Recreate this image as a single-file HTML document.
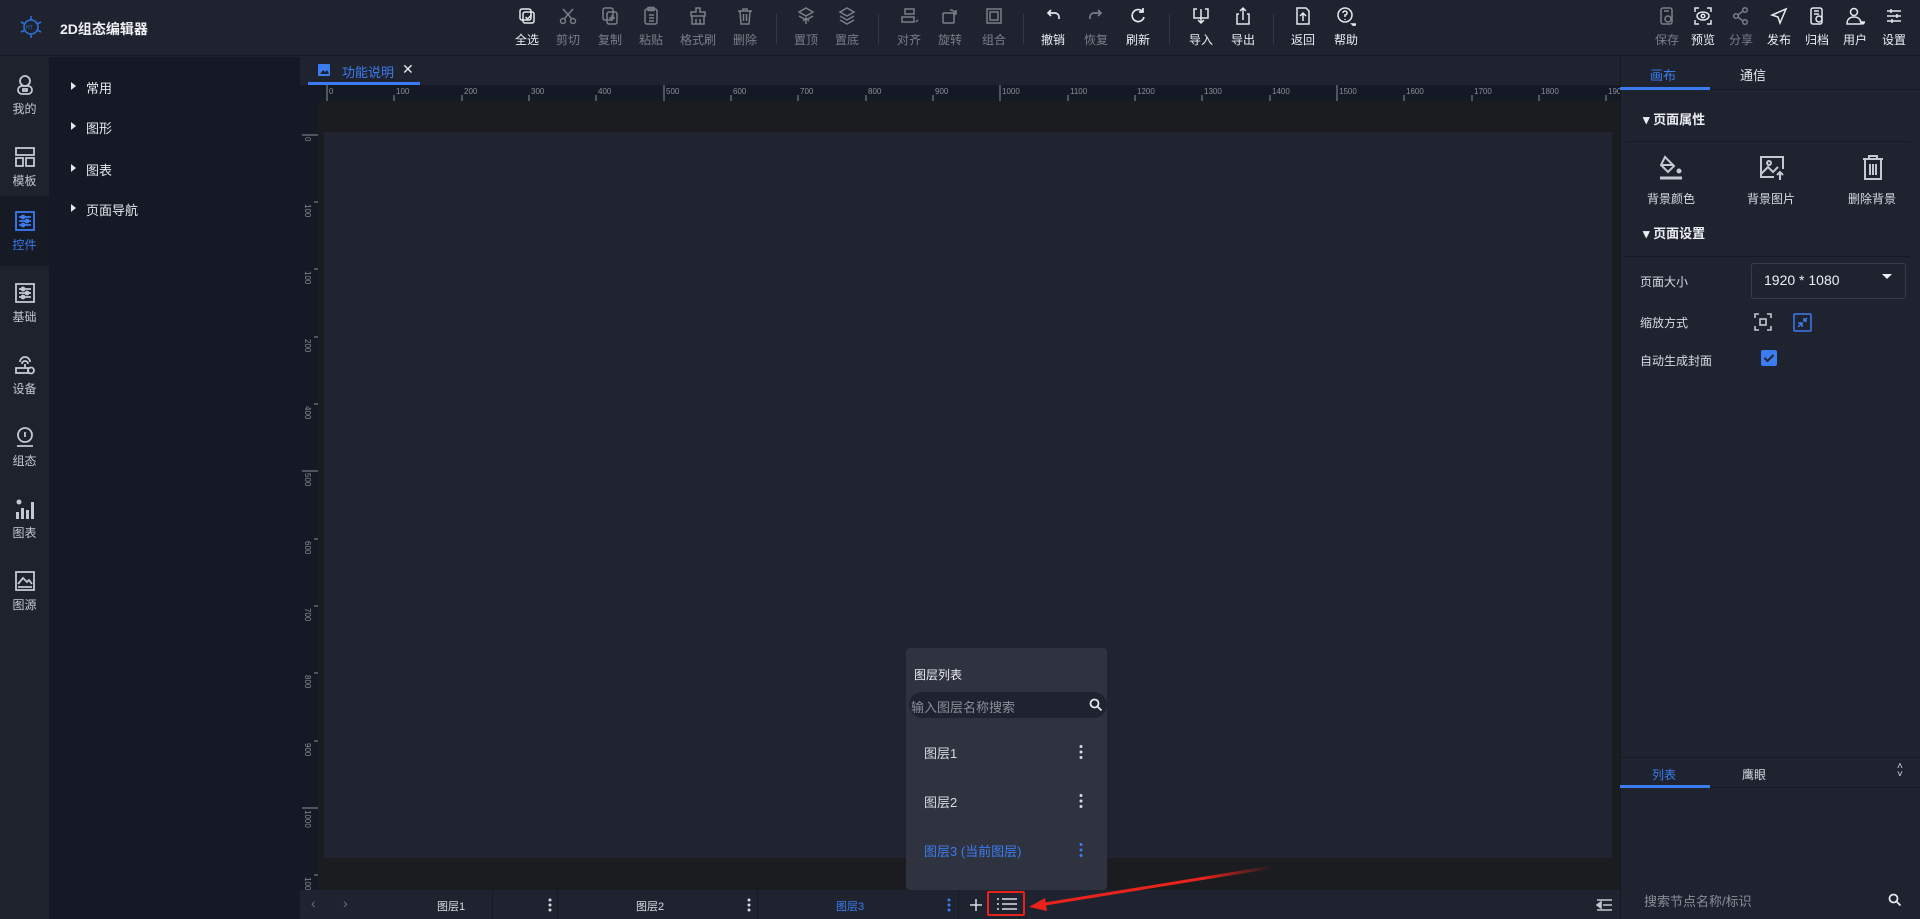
<!DOCTYPE html>
<html><head><meta charset="utf-8"><style>
*{margin:0;padding:0;box-sizing:border-box}
body{width:1920px;height:919px;overflow:hidden;background:#1f2330;font-family:"Liberation Sans","Noto Sans CJK SC",sans-serif;color:#d8dbe2;position:relative;font-size:12px}
.a{position:absolute}
.tb{position:absolute;top:6px;width:44px;margin-left:-22px;text-align:center;font-size:12px}
.tb svg{display:block;margin:0 auto 5px;width:20px;height:20px}
.on{color:#eceef2}.off{color:#7a7e88}
.sep{position:absolute;top:14px;width:1px;height:30px;background:#343846}
.nav{position:absolute;left:0;width:49px;height:72px;text-align:center;font-size:12px;color:#c5c8d0}
.nav svg{display:block;margin:10px auto 4px;width:22px;height:22px}
.lp{position:absolute;left:71px;font-size:13px;color:#e6e8ec}
.lp:before{content:"";position:absolute;left:0;top:4px;border-left:5px solid #e6e8ec;border-top:4px solid transparent;border-bottom:4px solid transparent}
.lp span{margin-left:15px}
.hr{position:absolute;font-size:8px;color:#8a8e98;top:87px}
.vr{position:absolute;left:303px;font-size:8px;color:#8a8e98;transform:rotate(90deg);transform-origin:left top}
</style></head><body>
<!-- header -->
<div class="a" style="left:0;top:0;width:1920px;height:56px;background:#1f2330;border-bottom:1px solid #151922"></div>
<svg class="a" style="left:18px;top:14px" width="26" height="26" viewBox="0 0 26 26" fill="none" stroke="#2f6fd6" stroke-width="1.6"><circle cx="13" cy="13" r="7"/><path d="M13 2v4M13 20v4M3 8l4 2M23 8l-4 2M3 18l4-2M23 18l-4-2"/><text x="8" y="15" font-size="5" fill="#2f6fd6" stroke="none">HT</text></svg>
<div class="a" style="left:60px;top:19px;font-size:14px;font-weight:bold;color:#f0f1f4">2D组态编辑器</div>

<div class="tb on" style="left:527px"><svg viewBox="0 0 20 20" fill="none" stroke="#e6e8ec" stroke-width="1.5"><rect x="3" y="3" width="11" height="11" rx="2"/><rect x="6" y="6" width="11" height="11" rx="2"/><path d="M8.5 11l2 2 4-4"/></svg>全选</div>
<div class="tb off" style="left:568px"><svg viewBox="0 0 20 20" fill="none" stroke="#7a7e88" stroke-width="1.5"><circle cx="5" cy="15" r="2.5"/><circle cx="15" cy="15" r="2.5"/><path d="M6 13L15 3M14 13L5 3"/></svg>剪切</div>
<div class="tb off" style="left:610px"><svg viewBox="0 0 20 20" fill="none" stroke="#7a7e88" stroke-width="1.5"><rect x="3" y="2" width="10" height="12" rx="2"/><rect x="7" y="6" width="10" height="12" rx="2"/><path d="M12 9v6M9 12h6"/></svg>复制</div>
<div class="tb off" style="left:651px"><svg viewBox="0 0 20 20" fill="none" stroke="#7a7e88" stroke-width="1.5"><rect x="4" y="3" width="12" height="15" rx="2"/><rect x="7" y="1.5" width="6" height="3"/><path d="M8 9h5M8 12h5M8 15h5"/></svg>粘贴</div>
<div class="tb off" style="left:698px"><svg viewBox="0 0 20 20" fill="none" stroke="#7a7e88" stroke-width="1.5"><path d="M8 2h4v4h5v4H3V6h5zM4 10v8h12v-8M8 13v5M12 13v5"/></svg>格式刷</div>
<div class="tb off" style="left:745px"><svg viewBox="0 0 20 20" fill="none" stroke="#7a7e88" stroke-width="1.5"><path d="M3 5h14M8 5V3h4v2M5 5l1 13h8l1-13M8.5 8v7M11.5 8v7"/></svg>删除</div>
<div class="sep" style="left:776px"></div>
<div class="tb off" style="left:806px"><svg viewBox="0 0 20 20" fill="none" stroke="#7a7e88" stroke-width="1.5"><path d="M10 2l7 4-7 4-7-4zM3 10l7 4 7-4M10 18v-6M7 15l3-3 3 3"/></svg>置顶</div>
<div class="tb off" style="left:847px"><svg viewBox="0 0 20 20" fill="none" stroke="#7a7e88" stroke-width="1.5"><path d="M10 2l7 4-7 4-7-4zM3 10l7 4 7-4M3 14l7 4 7-4"/></svg>置底</div>
<div class="sep" style="left:878px"></div>
<div class="tb off" style="left:909px"><svg viewBox="0 0 20 20" fill="none" stroke="#7a7e88" stroke-width="1.5"><rect x="6" y="3" width="9" height="5"/><rect x="3" y="11" width="12" height="5"/><path d="M17 16l2-2"/></svg>对齐</div>
<div class="tb off" style="left:950px"><svg viewBox="0 0 20 20" fill="none" stroke="#7a7e88" stroke-width="1.5"><rect x="3" y="7" width="11" height="10" rx="1"/><path d="M10 4a6 6 0 0 1 6 4M16 4v4h-3"/></svg>旋转</div>
<div class="tb off" style="left:994px"><svg viewBox="0 0 20 20" fill="none" stroke="#7a7e88" stroke-width="1.5"><rect x="3" y="3" width="14" height="14"/><rect x="6" y="6" width="8" height="8"/></svg>组合</div>
<div class="sep" style="left:1023px"></div>
<div class="tb on" style="left:1053px"><svg viewBox="0 0 20 20" fill="none" stroke="#e6e8ec" stroke-width="1.7"><path d="M5 7h7a4 4 0 0 1 4 4v2M8 4L5 7l3 3"/></svg>撤销</div>
<div class="tb off" style="left:1096px"><svg viewBox="0 0 20 20" fill="none" stroke="#7a7e88" stroke-width="1.7"><path d="M15 7H8a4 4 0 0 0-4 4v2M12 4l3 3-3 3"/></svg>恢复</div>
<div class="tb on" style="left:1138px"><svg viewBox="0 0 20 20" fill="none" stroke="#e6e8ec" stroke-width="1.7"><path d="M15 6a6 6 0 1 0 1 5M15 2v4h-4"/></svg>刷新</div>
<div class="sep" style="left:1169px"></div>
<div class="tb on" style="left:1201px"><svg viewBox="0 0 20 20" fill="none" stroke="#e6e8ec" stroke-width="1.5"><path d="M6 3H3v9h14V3h-3M10 3v14M7 14l3 3 3-3"/></svg>导入</div>
<div class="tb on" style="left:1243px"><svg viewBox="0 0 20 20" fill="none" stroke="#e6e8ec" stroke-width="1.5"><path d="M6 8H4v10h12V8h-2M10 14V2M7 5l3-3 3 3"/></svg>导出</div>
<div class="sep" style="left:1273px"></div>
<div class="tb on" style="left:1303px"><svg viewBox="0 0 20 20" fill="none" stroke="#e6e8ec" stroke-width="1.5"><path d="M4 2h9l3 3v13H4zM10 15V8M7 10l3-3 3 3"/></svg>返回</div>
<div class="tb on" style="left:1346px"><svg viewBox="0 0 20 20" fill="none" stroke="#e6e8ec" stroke-width="1.5"><circle cx="9" cy="9" r="7"/><path d="M7 7a2 2 0 1 1 2 2v2M9 13v1"/><path d="M16 18h4l-2 2z" fill="#e6e8ec"/></svg>帮助</div>

<div class="tb off" style="left:1667px"><svg viewBox="0 0 20 20" fill="none" stroke="#7a7e88" stroke-width="1.5"><rect x="4" y="2" width="11" height="16" rx="2"/><circle cx="11" cy="13" r="3"/><path d="M7 5h5"/></svg>保存</div>
<div class="tb on" style="left:1703px"><svg viewBox="0 0 20 20" fill="none" stroke="#e6e8ec" stroke-width="1.5"><path d="M2 6V2h4M14 2h4v4M18 14v4h-4M6 18H2v-4"/><ellipse cx="10" cy="10" rx="6" ry="4"/><circle cx="10" cy="10" r="1.8"/></svg>预览</div>
<div class="tb off" style="left:1741px"><svg viewBox="0 0 20 20" fill="none" stroke="#7a7e88" stroke-width="1.5"><circle cx="5" cy="10" r="2.3"/><circle cx="14" cy="4" r="2.3"/><circle cx="14" cy="16" r="2.3"/><path d="M7 9l5-4M7 11l5 4"/></svg>分享</div>
<div class="tb on" style="left:1779px"><svg viewBox="0 0 20 20" fill="none" stroke="#e6e8ec" stroke-width="1.5"><path d="M17 3L3 9l6 2 2 6z"/></svg>发布</div>
<div class="tb on" style="left:1817px"><svg viewBox="0 0 20 20" fill="none" stroke="#e6e8ec" stroke-width="1.5"><rect x="4" y="2" width="11" height="16" rx="2"/><circle cx="12" cy="13" r="3"/><path d="M7 5h5M7 8h5"/></svg>归档</div>
<div class="tb on" style="left:1855px"><svg viewBox="0 0 20 20" fill="none" stroke="#e6e8ec" stroke-width="1.5"><circle cx="9" cy="6" r="3.5"/><path d="M2 18c0-5 3-7 7-7s7 2 7 7z"/><path d="M16 16h4l-2 2z" fill="#e6e8ec"/></svg>用户</div>
<div class="tb on" style="left:1894px"><svg viewBox="0 0 20 20" fill="none" stroke="#e6e8ec" stroke-width="1.5"><path d="M3 5h14M3 10h14M3 15h14M7 3v4M13 8v4M8 13v4"/></svg>设置</div>

<!-- left nav -->
<div class="a" style="left:0;top:57px;width:49px;height:862px;background:#1e222d"></div>
<div class="a" style="left:0;top:196px;width:49px;height:70px;background:#151a25"></div>
<div class="nav" style="top:64px"><svg viewBox="0 0 22 22" fill="none" stroke="#c5c8d0" stroke-width="1.8"><circle cx="11" cy="7" r="5"/><rect x="4" y="12" width="14" height="8" rx="4"/><rect x="9" y="15" width="4" height="2"/></svg>我的</div>
<div class="nav" style="top:136px"><svg viewBox="0 0 22 22" fill="none" stroke="#c5c8d0" stroke-width="1.8"><rect x="2" y="2" width="18" height="7"/><rect x="2" y="12" width="7" height="8"/><rect x="12" y="12" width="8" height="8"/></svg>模板</div>
<div class="nav" style="top:200px;color:#3b7cf0"><svg viewBox="0 0 22 22" fill="none" stroke="#3b7cf0" stroke-width="1.8"><rect x="2" y="2" width="18" height="18"/><path d="M5 7h12M5 11h12M5 15h12"/><circle cx="9" cy="7" r="1.5"/><circle cx="13" cy="11" r="1.5"/><circle cx="9" cy="15" r="1.5"/></svg>控件</div>
<div class="nav" style="top:272px"><svg viewBox="0 0 22 22" fill="none" stroke="#c5c8d0" stroke-width="1.8"><rect x="2" y="2" width="18" height="18"/><path d="M5 7h12M5 11h12M5 15h12"/><circle cx="9" cy="7" r="1.5"/><circle cx="13" cy="11" r="1.5"/><circle cx="9" cy="15" r="1.5"/></svg>基础</div>
<div class="nav" style="top:344px"><svg viewBox="0 0 22 22" fill="none" stroke="#c5c8d0" stroke-width="1.8"><path d="M6 8a5 5 0 0 1 10 0M8 10a3 3 0 0 1 6 0M11 10v4"/><rect x="2" y="14" width="12" height="5"/><circle cx="17" cy="16.5" r="3"/></svg>设备</div>
<div class="nav" style="top:416px"><svg viewBox="0 0 22 22" fill="none" stroke="#c5c8d0" stroke-width="1.8"><circle cx="11" cy="9" r="7"/><path d="M11 6v5M3 20h16"/></svg>组态</div>
<div class="nav" style="top:488px"><svg viewBox="0 0 22 22" fill="#c5c8d0"><circle cx="5" cy="4" r="2.5"/><rect x="2" y="14" width="3" height="7"/><rect x="7" y="10" width="3" height="11"/><rect x="12" y="12" width="3" height="9"/><rect x="17" y="4" width="3" height="17"/></svg>图表</div>
<div class="nav" style="top:560px"><svg viewBox="0 0 22 22" fill="none" stroke="#c5c8d0" stroke-width="1.8"><rect x="2" y="2" width="18" height="18"/><path d="M4 14l5-6 4 4 2-2 3 4M4 17h14"/></svg>图源</div>

<!-- left panel -->
<div class="a" style="left:49px;top:57px;width:251px;height:862px;background:#141925"></div>
<div class="lp" style="top:78px"><span>常用</span></div>
<div class="lp" style="top:118px"><span>图形</span></div>
<div class="lp" style="top:160px"><span>图表</span></div>
<div class="lp" style="top:200px"><span>页面导航</span></div>

<!-- tab bar -->
<div class="a" style="left:300px;top:57px;width:1320px;height:28px;background:#1f2330"></div>
<div class="a" style="left:308px;top:57px;width:112px;height:28px;border-bottom:3px solid #3b7cf0"></div>
<svg class="a" style="left:318px;top:64px" width="12" height="12"><rect width="12" height="12" rx="1" fill="#3b7cf0"/><path d="M2 10l3-4 2 2 2-2 2 4z" fill="#1f2330"/></svg>
<div class="a" style="left:342px;top:62px;font-size:13px;color:#3b7cf0">功能说明</div>
<div class="a" style="left:402px;top:61px;font-size:14px;color:#e6e8ec">✕</div>

<!-- rulers -->
<div class="a" style="left:300px;top:85px;width:1320px;height:16px;background:#141925"></div>
<div class="a" style="left:300px;top:101px;width:18px;height:789px;background:#141925"></div>
<svg class="a" style="left:318px;top:85px" width="1302" height="16">
<g stroke="#8a8e98" stroke-width="1">
<path d="M9 0v16M76 10v6M144 10v6M211 10v6M278 10v6M346 0v16M413 10v6M480 10v6M548 10v6M615 10v6M682 0v16M750 10v6M817 10v6M884 10v6M952 10v6M1019 0v16M1086 10v6M1154 10v6M1221 10v6M1288 10v6"/></g>
<g fill="#8a8e98" font-size="8" font-family="Liberation Sans">
<text x="11" y="9">0</text><text x="78" y="9">100</text><text x="146" y="9">200</text><text x="213" y="9">300</text><text x="280" y="9">400</text><text x="348" y="9">500</text><text x="415" y="9">600</text><text x="482" y="9">700</text><text x="550" y="9">800</text><text x="617" y="9">900</text><text x="684" y="9">1000</text><text x="752" y="9">1100</text><text x="819" y="9">1200</text><text x="886" y="9">1300</text><text x="954" y="9">1400</text><text x="1021" y="9">1500</text><text x="1088" y="9">1600</text><text x="1156" y="9">1700</text><text x="1223" y="9">1800</text><text x="1290" y="9">1900</text></g></svg>
<svg class="a" style="left:300px;top:101px" width="18" height="789">
<g stroke="#8a8e98"><path d="M2 34h16M14 101h4M14 168h4M14 236h4M14 303h4M2 370h16M14 438h4M14 505h4M14 572h4M14 640h4M2 707h16M14 774h4"/></g>
<g fill="#8a8e98" font-size="8" font-family="Liberation Sans">
<text transform="translate(5,36) rotate(90)">0</text><text transform="translate(5,103) rotate(90)">100</text><text transform="translate(5,170) rotate(90)">100</text><text transform="translate(5,238) rotate(90)">200</text><text transform="translate(5,305) rotate(90)">400</text><text transform="translate(5,372) rotate(90)">500</text><text transform="translate(5,440) rotate(90)">600</text><text transform="translate(5,507) rotate(90)">700</text><text transform="translate(5,574) rotate(90)">800</text><text transform="translate(5,642) rotate(90)">900</text><text transform="translate(5,709) rotate(90)">1000</text><text transform="translate(5,776) rotate(90)">100</text></g></svg>

<!-- canvas -->
<div class="a" style="left:318px;top:101px;width:1302px;height:789px;background:#1b1c1f"></div>
<div class="a" style="left:324px;top:132px;width:1288px;height:726px;background:#1f2430"></div>

<!-- bottom bar -->
<div class="a" style="left:300px;top:890px;width:1320px;height:29px;background:#1f2330"></div>
<div class="a" style="left:311px;top:895px;font-size:14px;color:#6e727c">‹</div>
<div class="a" style="left:343px;top:895px;font-size:14px;color:#6e727c">›</div>
<div class="a" style="left:437px;top:898px;font-size:11px;color:#d8dbe2">图层1</div>
<div class="a" style="left:636px;top:898px;font-size:11px;color:#d8dbe2">图层2</div>
<div class="a" style="left:836px;top:898px;font-size:11px;color:#3b7cf0">图层3</div>
<svg class="a" style="left:548px;top:897px" width="4" height="16" fill="#d8dbe2"><circle cx="2" cy="3" r="1.5"/><circle cx="2" cy="8" r="1.5"/><circle cx="2" cy="13" r="1.5"/></svg>
<svg class="a" style="left:747px;top:897px" width="4" height="16" fill="#d8dbe2"><circle cx="2" cy="3" r="1.5"/><circle cx="2" cy="8" r="1.5"/><circle cx="2" cy="13" r="1.5"/></svg>
<svg class="a" style="left:947px;top:897px" width="4" height="16" fill="#3b7cf0"><circle cx="2" cy="3" r="1.5"/><circle cx="2" cy="8" r="1.5"/><circle cx="2" cy="13" r="1.5"/></svg>
<div class="a" style="left:492px;top:890px;width:1px;height:29px;background:#141925"></div>
<div class="a" style="left:557px;top:890px;width:1px;height:29px;background:#141925"></div>
<div class="a" style="left:757px;top:890px;width:1px;height:29px;background:#141925"></div>
<div class="a" style="left:958px;top:890px;width:1px;height:29px;background:#141925"></div>
<svg class="a" style="left:969px;top:898px" width="14" height="14" stroke="#d8dbe2" stroke-width="1.5"><path d="M7 1v12M1 7h12"/></svg>
<div class="a" style="left:987px;top:891px;width:38px;height:25px;border:2px solid #e8231b;border-radius:2px"></div>
<svg class="a" style="left:996px;top:896px" width="22" height="16" stroke="#d8dbe2" stroke-width="1.6"><path d="M1 3h2M1 8h2M1 13h2M6 3h15M6 8h15M6 13h15"/></svg>
<svg class="a" style="left:1025px;top:860px" width="260" height="55"><defs><linearGradient id="g" x1="1" x2="0"><stop offset="0" stop-color="#e8231b" stop-opacity="0"/><stop offset="0.3" stop-color="#e8231b"/></linearGradient></defs><path d="M248 7L14 45" stroke="url(#g)" stroke-width="3"/><path d="M4 47l16-9 2 13z" fill="#e8231b"/></svg>
<svg class="a" style="left:1596px;top:898px" width="16" height="14" stroke="#c5c8d0" stroke-width="1.5"><path d="M1 2h15M7 7h9M1 12h15"/><path d="M1 7l4-3v6z" fill="#c5c8d0"/></svg>

<!-- popup -->
<div class="a" style="left:906px;top:648px;width:201px;height:242px;background:#2f3340;border-radius:4px"></div>
<div class="a" style="left:914px;top:666px;font-size:12px;color:#eceef2">图层列表</div>
<div class="a" style="left:909px;top:692px;width:198px;height:26px;background:#1f2330;border-radius:13px"></div>
<div class="a" style="left:911px;top:697px;font-size:13px;color:#8a8e98">输入图层名称搜索</div>
<svg class="a" style="left:1089px;top:698px" width="14" height="14" fill="none" stroke="#e6e8ec" stroke-width="1.8"><circle cx="5.5" cy="5.5" r="4"/><path d="M8.5 8.5l4 4"/></svg>
<div class="a" style="left:924px;top:743px;font-size:13px;color:#d8dbe2">图层1</div>
<div class="a" style="left:924px;top:792px;font-size:13px;color:#d8dbe2">图层2</div>
<div class="a" style="left:924px;top:841px;font-size:13px;color:#3b7cf0">图层3 (当前图层)</div>
<svg class="a" style="left:1079px;top:744px" width="4" height="16" fill="#d8dbe2"><circle cx="2" cy="2.5" r="1.5"/><circle cx="2" cy="8" r="1.5"/><circle cx="2" cy="13.5" r="1.5"/></svg>
<svg class="a" style="left:1079px;top:793px" width="4" height="16" fill="#d8dbe2"><circle cx="2" cy="2.5" r="1.5"/><circle cx="2" cy="8" r="1.5"/><circle cx="2" cy="13.5" r="1.5"/></svg>
<svg class="a" style="left:1079px;top:842px" width="4" height="16" fill="#3b7cf0"><circle cx="2" cy="2.5" r="1.5"/><circle cx="2" cy="8" r="1.5"/><circle cx="2" cy="13.5" r="1.5"/></svg>

<!-- right panel -->
<div class="a" style="left:1620px;top:57px;width:300px;height:862px;background:#1f2330;border-left:1px solid #151922"></div>
<div class="a" style="left:1650px;top:65px;font-size:13px;color:#3b7cf0">画布</div>
<div class="a" style="left:1740px;top:65px;font-size:13px;color:#e6e8ec">通信</div>
<div class="a" style="left:1620px;top:89px;width:300px;height:1px;background:#151922"></div>
<div class="a" style="left:1620px;top:87px;width:90px;height:3px;background:#3b7cf0"></div>
<div class="a" style="left:1643px;top:109px;font-size:13px;color:#eceef2;font-weight:bold">▾ 页面属性</div>
<div class="a" style="left:1625px;top:141px;width:285px;height:1px;background:#151922"></div>
<svg class="a" style="left:1657px;top:154px" width="28" height="28" fill="none" stroke="#c5c8d0" stroke-width="2"><path d="M8 3l9 9-6 6-7-7z"/><path d="M4 11h13" /><path d="M3 24h22" stroke-width="3"/><circle cx="22" cy="17" r="1.5" fill="#c5c8d0"/></svg>
<svg class="a" style="left:1758px;top:154px" width="28" height="28" fill="none" stroke="#c5c8d0" stroke-width="2"><path d="M16 23H3V3h22v12"/><circle cx="11" cy="9" r="2"/><path d="M3 20l7-7 5 5 5-5"/><path d="M22 26v-8M19 21l3-3 3 3"/></svg>
<svg class="a" style="left:1859px;top:154px" width="28" height="28" fill="none" stroke="#c5c8d0" stroke-width="2"><path d="M4 5h20M10 5V2h8v3M6 5v20h16V5M11 10v11M14 10v11M17 10v11"/></svg>
<div class="a" style="left:1647px;top:190px;font-size:12px;color:#d8dbe2">背景颜色</div>
<div class="a" style="left:1747px;top:190px;font-size:12px;color:#d8dbe2">背景图片</div>
<div class="a" style="left:1848px;top:190px;font-size:12px;color:#d8dbe2">删除背景</div>
<div class="a" style="left:1643px;top:223px;font-size:13px;color:#eceef2;font-weight:bold">▾ 页面设置</div>
<div class="a" style="left:1625px;top:256px;width:285px;height:1px;background:#151922"></div>
<div class="a" style="left:1640px;top:273px;font-size:12px;color:#d8dbe2">页面大小</div>
<div class="a" style="left:1751px;top:263px;width:155px;height:36px;border:1px solid #383c48;border-radius:3px"></div>
<div class="a" style="left:1764px;top:272px;font-size:14px;color:#eceef2">1920 * 1080</div>
<div class="a" style="left:1882px;top:274px;border-top:5px solid #eceef2;border-left:5px solid transparent;border-right:5px solid transparent"></div>
<div class="a" style="left:1640px;top:314px;font-size:12px;color:#d8dbe2">缩放方式</div>
<svg class="a" style="left:1754px;top:313px" width="18" height="18" fill="none" stroke="#c5c8d0" stroke-width="1.6"><path d="M1 5V1h4M13 1h4v4M17 13v4h-4M5 17H1v-4"/><rect x="6" y="6" width="6" height="6"/></svg>
<svg class="a" style="left:1793px;top:313px" width="19" height="19" fill="none" stroke="#3b7cf0" stroke-width="1.5"><rect x="1" y="1" width="17" height="17" rx="1"/><path d="M5 14l4-4M5 10h4v4M14 5l-3 3M11 5v3h3"/></svg>
<div class="a" style="left:1640px;top:352px;font-size:12px;color:#d8dbe2">自动生成封面</div>
<div class="a" style="left:1761px;top:350px;width:16px;height:16px;background:#3b7cf0;border-radius:2px"></div>
<svg class="a" style="left:1761px;top:350px" width="16" height="16" fill="none" stroke="#1f2330" stroke-width="2"><path d="M3.5 8l3 3 6-6"/></svg>

<div class="a" style="left:1620px;top:757px;width:300px;height:1px;background:#151922"></div>
<div class="a" style="left:1652px;top:766px;font-size:12px;color:#3b7cf0">列表</div>
<div class="a" style="left:1742px;top:766px;font-size:12px;color:#d8dbe2">鹰眼</div>
<div class="a" style="left:1897px;top:763px;font-size:10px;line-height:8px;color:#d8dbe2;text-align:center">˄<br>˅</div>
<div class="a" style="left:1620px;top:787px;width:300px;height:1px;background:#151922"></div>
<div class="a" style="left:1620px;top:785px;width:90px;height:3px;background:#3b7cf0"></div>
<div class="a" style="left:1644px;top:891px;font-size:13px;color:#8a8e98">搜索节点名称/标识</div>
<svg class="a" style="left:1888px;top:893px" width="14" height="14" fill="none" stroke="#e6e8ec" stroke-width="1.8"><circle cx="5.5" cy="5.5" r="4"/><path d="M8.5 8.5l4 4"/></svg>
</body></html>
